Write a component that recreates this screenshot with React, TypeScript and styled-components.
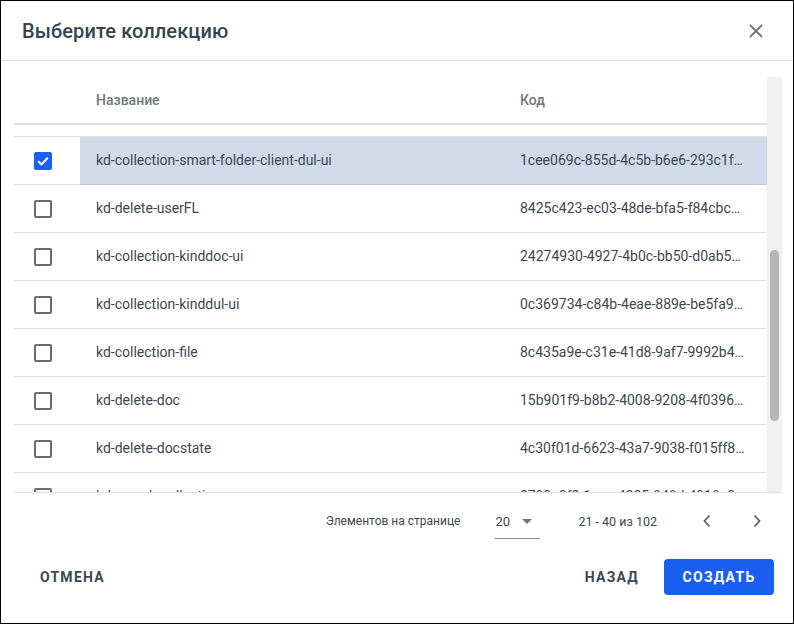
import { useLayoutEffect, useRef, useState } from 'react';
import styled, { createGlobalStyle, css } from 'styled-components';

const GlobalStyle = createGlobalStyle`
  * {
    box-sizing: border-box;
  }
  html, body {
    margin: 0;
    padding: 0;
    background: #ffffff;
  }
  body {
    font-family: Roboto, 'Liberation Sans', sans-serif;
  }
`;

interface Row {
  id: string;
  name: string;
  code: string;
}

const rows: Row[] = [
  { id: '1', name: 'kd-collection-agreement-ui', code: '3b1f6a20-7c41-4d0e-9a52-0f1c7d2b8e11' },
  { id: '2', name: 'kd-collection-contract', code: '51e0c9a4-22d3-4b7f-8f60-6a1e4c2d9b70' },
  { id: '3', name: 'kd-collection-person-ui', code: '9d24e6f1-03ab-4c8e-b2f7-71a0d5e3c6f4' },
  { id: '4', name: 'kd-delete-agreement', code: 'a07c3e52-6f19-4e28-9d01-2bc48f7e5a13' },
  { id: '5', name: 'kd-collection-archive', code: 'c6f81b09-4d2e-47a3-8e5c-93d02a1f6b48' },
  { id: '6', name: 'kd-delete-person', code: '0e93a7d4-58bc-4f12-a6e3-d41c8b2079f5' },
  { id: '7', name: 'kd-collection-signature-ui', code: '72bd5f3e-9a06-4c71-b8d4-e5f1302a6c89' },
  { id: '8', name: 'kd-delete-archive', code: 'f4a2096c-1e7b-4d53-9c2a-8b60e7d31f05' },
  { id: '9', name: 'kd-collection-dul', code: '6c19e8b3-ad45-4f07-9e6b-5270c4f1d3a2' },
  { id: '10', name: 'kd-collection-smart-folder-client-dul-ui', code: '1cee069c-855d-4c5b-b6e6-293c1f8a4d21' },
  { id: '11', name: 'kd-delete-userFL', code: '8425c423-ec03-48de-bfa5-f84cbc19a0e7' },
  { id: '12', name: 'kd-collection-kinddoc-ui', code: '24274930-4927-4b0c-bb50-d0ab5c7e31f8' },
  { id: '13', name: 'kd-collection-kinddul-ui', code: '0c369734-c84b-4eae-889e-be5fa9d2107c' },
  { id: '14', name: 'kd-collection-file', code: '8c435a9e-c31e-41d8-9af7-9992b4e06d15' },
  { id: '15', name: 'kd-delete-doc', code: '15b901f9-b8b2-4008-9208-4f0396ac72e4' },
  { id: '16', name: 'kd-delete-docstate', code: '4c30f01d-6623-43a7-9038-f015ff8b2c96' },
  { id: '17', name: 'kd-search-collection', code: '2799c0f2-1aae-4225-848d-4918c0b7e5a3' },
  { id: '18', name: 'kd-collection-client-ui', code: 'e81d4c07-2f6a-4b39-a0c5-7d93f1e2b846' },
  { id: '19', name: 'kd-delete-client', code: 'b5f0a3e9-7c12-48d6-91ab-0e4d6c5f2783' },
  { id: '20', name: 'kd-collection-task', code: '3e7a92c1-d04f-4a58-8b6e-c21f90d4a75b' },
];

const VIEW_HEIGHT = 415;

export default function App() {
  const [selected, setSelected] = useState<string>('10');
  const [thumb, setThumb] = useState({ top: 185, height: 173 });
  const scrollRef = useRef<HTMLDivElement>(null);

  const updateThumb = () => {
    const el = scrollRef.current;
    if (!el) return;
    const ratio = el.clientHeight / el.scrollHeight;
    const height = Math.max(24, Math.round(VIEW_HEIGHT * ratio));
    const maxScroll = el.scrollHeight - el.clientHeight;
    const top = maxScroll > 0 ? Math.round((el.scrollTop / maxScroll) * (VIEW_HEIGHT - height)) : 0;
    setThumb({ top, height });
  };

  useLayoutEffect(() => {
    if (scrollRef.current) {
      scrollRef.current.scrollTop = 420;
      updateThumb();
    }
  }, []);

  return (
    <>
      <GlobalStyle />
      <Dialog>
        <Header>
          <Title>Выберите коллекцию</Title>
          <CloseButton aria-label="close">
            <svg width="14" height="14" viewBox="0 0 14 14">
              <path d="M1 1L13 13M13 1L1 13" stroke="#757575" strokeWidth="1.8" />
            </svg>
          </CloseButton>
        </Header>
        <Body>
          <Scroller ref={scrollRef} onScroll={updateThumb}>
            <HeadRow>
              <HeadCell />
              <HeadCell>Название</HeadCell>
              <HeadCell>Код</HeadCell>
            </HeadRow>
            {rows.map((row) => {
              const isSelected = row.id === selected;
              return (
                <TableRow key={row.id} onClick={() => setSelected(row.id)}>
                  <CheckCell>
                    <Checkbox checked={isSelected}>
                      {isSelected && (
                        <svg width="14" height="14" viewBox="0 0 14 14">
                          <path
                            d="M2.2 7.2L5.5 10.4L11.8 3.8"
                            fill="none"
                            stroke="#ffffff"
                            strokeWidth="2"
                          />
                        </svg>
                      )}
                    </Checkbox>
                  </CheckCell>
                  <Cell selected={isSelected}>{row.name}</Cell>
                  <Cell selected={isSelected}>{row.code}</Cell>
                </TableRow>
              );
            })}
          </Scroller>
          <ScrollTrack>
            <ScrollThumb style={{ top: thumb.top, height: thumb.height }} />
          </ScrollTrack>
        </Body>
        <Paginator>
          <PageLabel>Элементов на странице</PageLabel>
          <PageSelect>
            <span>20</span>
            <svg width="10" height="5" viewBox="0 0 10 5">
              <path d="M0 0L5 5L10 0Z" fill="#757575" />
            </svg>
          </PageSelect>
          <RangeLabel>21 - 40 из 102</RangeLabel>
          <NavButton aria-label="prev">
            <svg width="10" height="14" viewBox="0 0 10 14">
              <path d="M7.5 1.5L2.5 7L7.5 12.5" fill="none" stroke="#616161" strokeWidth="1.8" />
            </svg>
          </NavButton>
          <NavButton aria-label="next">
            <svg width="10" height="14" viewBox="0 0 10 14">
              <path d="M2.5 1.5L7.5 7L2.5 12.5" fill="none" stroke="#616161" strokeWidth="1.8" />
            </svg>
          </NavButton>
        </Paginator>
        <Footer>
          <TextButton>Отмена</TextButton>
          <Actions>
            <TextButton>Назад</TextButton>
            <PrimaryButton>Создать</PrimaryButton>
          </Actions>
        </Footer>
      </Dialog>
    </>
  );
}

const Dialog = styled.div`
  width: 794px;
  height: 624px;
  border: 1px solid #000000;
  background: #ffffff;
  display: flex;
  flex-direction: column;
`;

const Header = styled.div`
  height: 60px;
  flex-shrink: 0;
  display: flex;
  align-items: center;
  justify-content: space-between;
  padding: 0 25px 0 21px;
  border-bottom: 1px solid #e0e0e0;
`;

const Title = styled.div`
  font-size: 20px;
  font-weight: 500;
  color: #34454f;
  letter-spacing: 0.1px;
`;

const CloseButton = styled.button`
  width: 24px;
  height: 24px;
  border: none;
  background: transparent;
  padding: 0;
  display: flex;
  align-items: center;
  justify-content: center;
  cursor: pointer;
`;

const Body = styled.div`
  margin: 16px 11px 0 13px;
  height: 416px;
  flex-shrink: 0;
  display: flex;
  border-bottom: 1px solid #e0e0e0;
`;

const Scroller = styled.div`
  flex: 1;
  min-width: 0;
  height: ${VIEW_HEIGHT}px;
  overflow-y: scroll;
  scrollbar-width: none;

  &::-webkit-scrollbar {
    display: none;
  }
`;

const ScrollTrack = styled.div`
  position: relative;
  width: 15px;
  height: ${VIEW_HEIGHT}px;
  background: #f1f1f1;
  flex-shrink: 0;
`;

const ScrollThumb = styled.div`
  position: absolute;
  left: 3px;
  width: 9px;
  border-radius: 5px;
  background: #b5b5b5;
`;

const grid = css`
  display: grid;
  grid-template-columns: 66px 424px 1fr;
`;

const HeadRow = styled.div`
  ${grid};
  position: sticky;
  top: 0;
  z-index: 1;
  height: 48px;
  background: #ffffff;
  border-bottom: 2px solid #e0e0e0;
`;

const HeadCell = styled.div`
  display: flex;
  align-items: center;
  padding: 0 16px;
  font-size: 14px;
  font-weight: 500;
  color: #6d787e;
`;

const TableRow = styled.div`
  ${grid};
  height: 48px;
  cursor: pointer;
`;

const CheckCell = styled.div`
  display: flex;
  align-items: center;
  padding-left: 20px;
  border-bottom: 1px solid #e0e0e0;
`;

const Checkbox = styled.div<{ checked?: boolean }>`
  ${({ checked }) => css`
    width: 18px;
    height: 18px;
    border-radius: 2px;
    display: flex;
    align-items: center;
    justify-content: center;
    border: ${checked ? 'none' : '2px solid #6b6b77'};
    background: ${checked ? '#1a5ff2' : '#ffffff'};
  `}
`;

const Cell = styled.div<{ selected?: boolean }>`
  ${({ selected }) => css`
    display: block;
    min-width: 0;
    padding: 0 22px 0 16px;
    font-size: 14px;
    line-height: 47px;
    color: #3a4951;
    background: ${selected ? '#d1daeb' : 'transparent'};
    border-bottom: 1px solid ${selected ? '#b9c4d9' : '#e0e0e0'};
    white-space: nowrap;
    overflow: hidden;
    text-overflow: ellipsis;
  `}
`;

const Paginator = styled.div`
  height: 56px;
  flex-shrink: 0;
  display: flex;
  align-items: center;
  justify-content: flex-end;
  padding-right: 16px;
  color: #3a4951;
`;

const PageLabel = styled.div`
  font-size: 12px;
  margin-right: 35px;
`;

const PageSelect = styled.div`
  width: 45px;
  height: 34px;
  margin-top: 2px;
  display: flex;
  align-items: center;
  justify-content: space-between;
  padding-right: 8px;
  font-size: 13px;
  border-bottom: 1px solid #8a8a8a;
`;

const RangeLabel = styled.div`
  font-size: 12.5px;
  margin-left: 38px;
  margin-right: 30px;
`;

const NavButton = styled.button`
  width: 40px;
  height: 40px;
  border: none;
  background: transparent;
  padding: 0;
  display: flex;
  align-items: center;
  justify-content: center;
  cursor: pointer;
  & + & {
    margin-left: 10px;
  }
`;

const Footer = styled.div`
  flex: 1;
  display: flex;
  align-items: flex-start;
  justify-content: space-between;
  padding: 10px 19px 0 23px;
`;

const Actions = styled.div`
  display: flex;
  gap: 9px;
`;

const TextButton = styled.button`
  height: 36px;
  padding: 0 16px;
  border: none;
  background: transparent;
  font-family: Roboto, 'Liberation Sans', sans-serif;
  font-size: 14px;
  font-weight: 700;
  letter-spacing: 1.25px;
  text-transform: uppercase;
  color: #3a4951;
  cursor: pointer;
`;

const PrimaryButton = styled.button`
  height: 36px;
  width: 110px;
  border: none;
  border-radius: 4px;
  background: #1a5ff2;
  font-family: Roboto, 'Liberation Sans', sans-serif;
  font-size: 14px;
  font-weight: 700;
  letter-spacing: 1.25px;
  text-transform: uppercase;
  color: #ffffff;
  cursor: pointer;
`;
